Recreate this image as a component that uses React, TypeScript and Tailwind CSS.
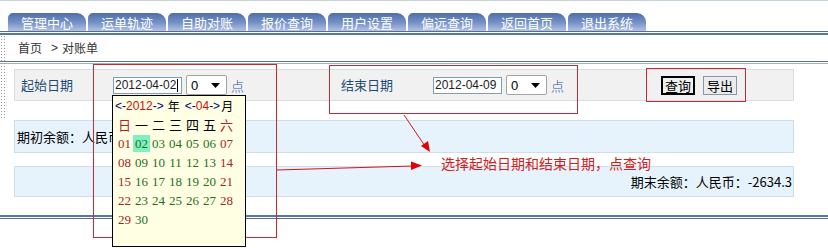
import React from "react";

const tabs = ["管理中心", "运单轨迹", "自助对账", "报价查询", "用户设置", "偏远查询", "返回首页", "退出系统"];

const weeks = [
  [1, 2, 3, 4, 5, 6, 7],
  [8, 9, 10, 11, 12, 13, 14],
  [15, 16, 17, 18, 19, 20, 21],
  [22, 23, 24, 25, 26, 27, 28],
  [29, 30],
];

const weekNames = ["日", "一", "二", "三", "四", "五", "六"];

const FakeSelect = () => (
  <div className="flex h-[20px] w-[41px] items-center justify-between rounded-[2px] border border-[#a4a4a4] bg-white pl-[4px] pr-[6px] text-[13px] leading-none text-black">
    <span className="font-['Liberation_Sans',sans-serif]">0</span>
    <svg width="9" height="5" viewBox="0 0 9 5">
      <polygon points="0,0 9,0 4.5,5" fill="#000" />
    </svg>
  </div>
);

const DateGroup = ({ value, caret }: { value: string; caret?: boolean }) => (
  <div className="flex w-[228px] items-center">
    <div className="relative flex h-[17px] w-[69px] items-center border border-[#7f9db9] bg-white pl-[1px] font-['Liberation_Sans',sans-serif] text-[12px] leading-none text-[#222]">
      {value}
      {caret && <span className="ml-[1px] h-[13px] w-[1px] bg-black" />}
    </div>
    <div className="ml-[4px]">
      <FakeSelect />
    </div>
    <span className="ml-[4px] mt-[2px] text-[13px] font-light text-[#1d5a96]">点</span>
  </div>
);

const Calendar = () => (
  <div className="absolute left-[112px] top-[95px] h-[152px] w-[134px] border border-black bg-[#ffffe4] pl-[2px]">
    <div className="flex h-[19px] items-center text-[12px] leading-none">
      <span className="font-['Liberation_Sans',sans-serif] text-[#000080]">&lt;-</span>
      <span className="font-['Liberation_Sans',sans-serif] text-[#cc1010]">2012</span>
      <span className="font-['Liberation_Sans',sans-serif] text-[#000080]">-&gt;</span>
      <span className="ml-[4px] text-black">年</span>
      <span className="ml-[5px] font-['Liberation_Sans',sans-serif] text-[#000080]">&lt;-</span>
      <span className="font-['Liberation_Sans',sans-serif] text-[#cc1010]">04</span>
      <span className="font-['Liberation_Sans',sans-serif] text-[#000080]">-&gt;</span>
      <span className="ml-[1px] text-black">月</span>
    </div>
    <div className="flex h-[19px] items-center pl-[1px]">
      {weekNames.map((w, i) => (
        <span
          key={w}
          className={`w-[17px] text-center text-[13px] leading-none ${
            i === 0 || i === 6 ? "text-[#b81c1c]" : "text-black"
          }`}
        >
          {w}
        </span>
      ))}
    </div>
    {weeks.map((row, r) => (
      <div key={r} className="flex h-[19px] items-center pl-[1px]">
        {row.map((d, i) => (
          <span
            key={d}
            className={`flex w-[17px] justify-center font-['Liberation_Serif',serif] text-[13px] leading-[13px] ${
              i === 0 || i === 6 ? "text-[#a82424]" : "text-[#1f6f1f]"
            }`}
          >
            <span className={`px-[2px] py-[2px] ${d === 2 ? "bg-[#7ff0c0]" : ""}`}>
              {String(d).padStart(2, "0")}
            </span>
          </span>
        ))}
      </div>
    ))}
  </div>
);

export default function App() {
  return (
    <div className="relative h-[249px] w-[828px] overflow-hidden bg-white font-['Noto_Sans_CJK_SC',sans-serif] text-[12px] text-black">
      <div className="h-[1px] bg-[#c6d2da]" />

      {/* tabs */}
      <div className="mt-[12px] flex gap-[2px] pl-[8px]">
        {tabs.map((t) => (
          <div
            key={t}
            className="flex h-[18px] w-[78px] items-center justify-center rounded-tl-[5px] rounded-tr-[9px] bg-[linear-gradient(to_bottom,#4d6eab,#7693c8_55%,#b3c2e2)] text-[13px] leading-none text-white"
          >
            {t}
          </div>
        ))}
      </div>
      <div className="h-[1px] bg-[#5a6c86]" />
      <div className="mt-[1px] h-[2px] bg-[#5677ad]" />

      {/* breadcrumb */}
      <div className="flex h-[26px] items-center pl-[18px] text-[12px] text-[#333]">
        首页<span className="ml-[9px] mr-[4px] font-['Liberation_Sans',sans-serif]">&gt;</span>对账单
      </div>
      <div className="h-[1px] bg-[#5b7090]" />
      <div className="mt-[1px] h-[1px] bg-[#9fb2c6]" />

      {/* filter row */}
      <div className="ml-[14px] mt-[5px] flex h-[32px] w-[780px] items-center border border-[#d6dde3] bg-[#f1f1f1]">
        <div className="w-[98px] pl-[6px] text-[13px] text-[#1d4c74]">起始日期</div>
        <DateGroup value="2012-04-02" caret />
        <div className="w-[92px] text-[13px] text-[#1d4c74]">结束日期</div>
        <DateGroup value="2012-04-09" />
        <div className="flex gap-[8px]">
          <button className="flex h-[19px] w-[34px] items-center justify-center border-2 border-black bg-[#efefef] text-[13px] leading-none">
            查询
          </button>
          <button className="flex h-[19px] w-[34px] items-center justify-center border border-[#8797ab] bg-[#ececec] text-[13px] leading-none">
            导出
          </button>
        </div>
      </div>

      {/* opening balance */}
      <div className="ml-[14px] mt-[19px] flex h-[33px] w-[780px] items-center border border-[#cfdfe9] bg-[#e6f3fc] pl-[2px] text-[13px]">
        期初余额：人民币
      </div>

      {/* closing balance */}
      <div className="ml-[14px] mt-[13px] flex h-[31px] w-[780px] items-center justify-end border border-[#cfdfe9] bg-[#e6f3fc] pr-[1px] text-[13px]">
        期末余额：人民币：-2634.3
      </div>

      <div className="mt-[18px] h-[2px] bg-[#5677ad]" />
      <div className="mt-[1px] h-[1px] bg-[#5a6c86]" />

      {/* left dotted edge */}
      <div className="absolute left-0 top-[35px] h-[85px] w-[6px] bg-[radial-gradient(#9a9a9a_0.8px,transparent_0.9px)] bg-[length:3px_3px]" />

      {/* annotations */}
      <svg className="pointer-events-none absolute inset-0" width="828" height="249">
        <rect x="93.5" y="64.5" width="183" height="173" fill="none" stroke="#c42a30" strokeWidth="1" />
        <rect x="329.5" y="65.5" width="248" height="48" fill="none" stroke="#c42a30" strokeWidth="1" />
        <rect x="646.5" y="68.5" width="99" height="33" fill="none" stroke="#c42a30" strokeWidth="1" />
        <line x1="404" y1="115" x2="425" y2="146" stroke="#d41414" strokeWidth="1" />
        <polygon points="430,152 421,146 428,141" fill="#e00000" />
        <line x1="277" y1="170" x2="412" y2="166" stroke="#d41414" strokeWidth="1" />
        <polygon points="422,165.5 411,161.5 411,170" fill="#e00000" />
      </svg>

      <Calendar />

      <div className="absolute left-[441px] top-[153px] text-[14px] leading-[20px] text-[#d0201c]">
        选择起始日期和结束日期，点查询
      </div>
    </div>
  );
}
